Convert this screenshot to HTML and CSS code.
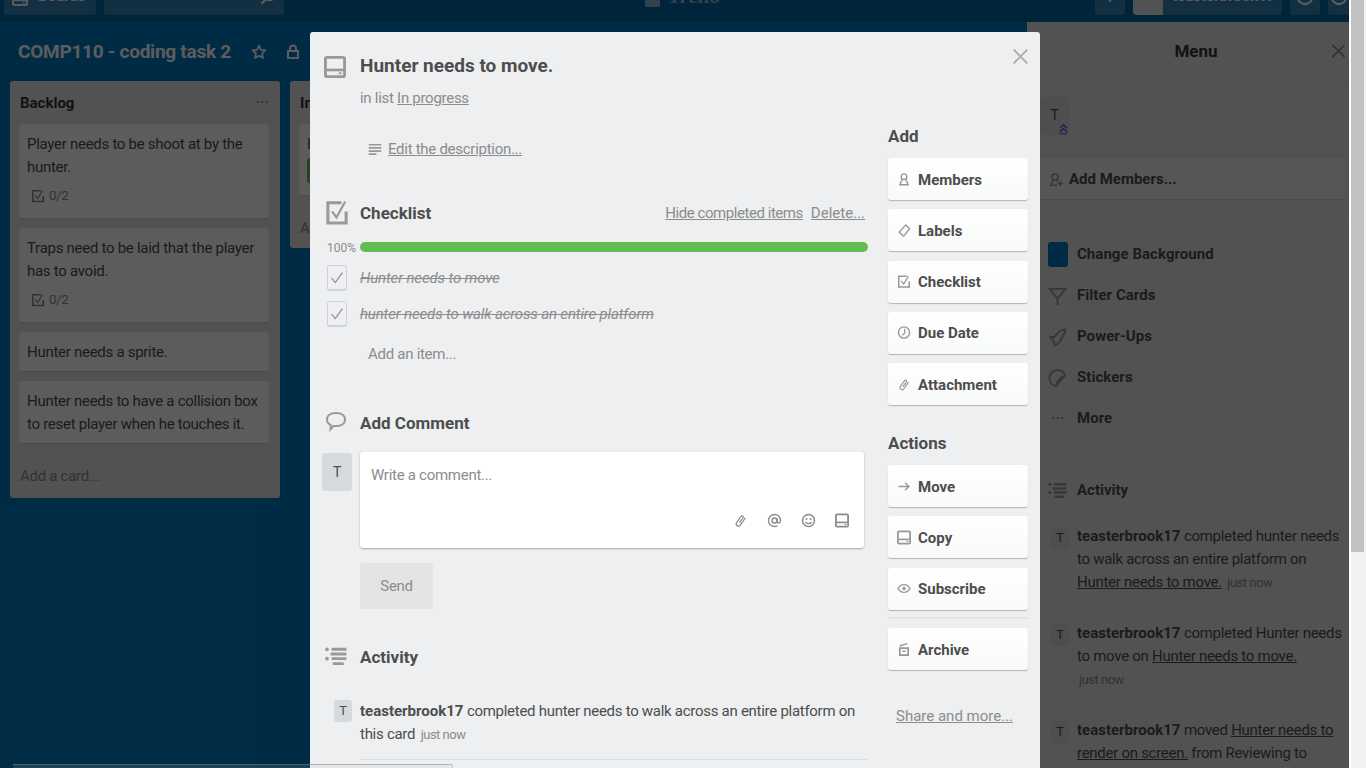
FILE: index.html
```html
<!DOCTYPE html>
<html lang="en">

<head>
    <meta charset="UTF-8">
    <title>Hunter needs to move. on COMP110 - coding task 2</title>
    <link rel="stylesheet" href="styles.css">
</head>

<body>

    <svg class="defs" width="0" height="0">
        <symbol id="i-card" viewBox="0 0 20 20"><rect x="1.300" y="1.300" width="17.400" height="17.400" rx="1.500" fill="none" stroke="currentColor" stroke-width="2.600"/><rect x="2" y="11.500" width="16" height="2.400" fill="currentColor"/><rect x="13.500" y="14.800" width="2.400" height="1.800" fill="currentColor"/></symbol>
        <symbol id="i-check" viewBox="0 0 20 22"><path d="M14 2.200H1.700v18.300h16.600V10" fill="none" stroke="currentColor" stroke-width="2.800"/><path d="M5.500 10l4 5.500L17.500 1" fill="none" stroke="currentColor" stroke-width="2"/></symbol>
        <symbol id="i-lines" viewBox="0 0 20 20"><path d="M1 2.500h18M1 7h18M1 11.500h18M1 16h11" stroke="currentColor" stroke-width="2.400"/></symbol>
        <symbol id="i-activity" viewBox="0 0 20 20"><circle cx="1.800" cy="3" r="1.700" fill="currentColor"/><circle cx="1.800" cy="11.500" r="1.700" fill="currentColor"/><path d="M6 3h13.500M5 7.300h14.500M6 11.500h13.500M7 16h10" stroke="currentColor" stroke-width="2.600"/></symbol>
        <symbol id="i-comment" viewBox="0 0 20 20"><path d="M10 2c5 0 9 2.300 9 6.500S15 15 10 15H7.500L4.500 18.300l.3-4.300C2.500 13 1 11 1 8.500 1 4.300 5 2 10 2z" fill="none" stroke="currentColor" stroke-width="2"/></symbol>
        <symbol id="i-clip" viewBox="0 0 20 20"><path d="M8.500 13L13.500 6c1-1.700-1.300-3.300-2.700-1.700L4.800 13c-2 3 2.400 6.300 4.800 3.200L16.500 6.500" fill="none" stroke="currentColor" stroke-width="1.700"/></symbol>
        <symbol id="i-at" viewBox="0 0 20 20"><circle cx="10" cy="10" r="3.300" fill="none" stroke="currentColor" stroke-width="1.900"/><path d="M13.300 6.500v5c0 2.500 4.700 2.500 4.700-1.500C18 5 14.500 2 10 2S2 5.500 2 10s3.500 8 8 8c1.500 0 3-.3 4-1" fill="none" stroke="currentColor" stroke-width="1.900"/></symbol>
        <symbol id="i-smile" viewBox="0 0 20 20"><circle cx="10" cy="10" r="8" fill="none" stroke="currentColor" stroke-width="2"/><circle cx="7.300" cy="8" r="1.400" fill="currentColor"/><circle cx="12.700" cy="8" r="1.400" fill="currentColor"/><path d="M5.800 12c1 2.800 7.400 2.800 8.400 0" fill="none" stroke="currentColor" stroke-width="1.700"/></symbol>
        <symbol id="i-person" viewBox="0 0 20 20"><circle cx="10" cy="6" r="4" fill="none" stroke="currentColor" stroke-width="2"/><path d="M7.500 9.500L4 17.500h12l-3.500-8" fill="none" stroke="currentColor" stroke-width="2"/></symbol>
        <symbol id="i-label" viewBox="0 0 20 20"><path d="M12.500 2l5.500 5.500-8.500 10.500-6.500-5.500z" fill="none" stroke="currentColor" stroke-width="2" stroke-linejoin="round"/></symbol>
        <symbol id="i-box" viewBox="0 0 20 20"><path d="M14 2.500H2.500v15.500h15v-8" fill="none" stroke="currentColor" stroke-width="2.200"/><path d="M6 9l3.500 4.500L16.500 2.500" fill="none" stroke="currentColor" stroke-width="1.800"/></symbol>
        <symbol id="i-clock" viewBox="0 0 20 20"><circle cx="10" cy="10" r="8" fill="none" stroke="currentColor" stroke-width="2"/><path d="M11 4.500V11L7.500 14" fill="none" stroke="currentColor" stroke-width="1.800"/></symbol>
        <symbol id="i-arrow" viewBox="0 0 20 20"><path d="M2 10h15M11.500 4.500L17 10l-5.500 5.500" fill="none" stroke="currentColor" stroke-width="2"/></symbol>
        <symbol id="i-eye" viewBox="0 0 20 20"><path d="M1.500 10C4 5.500 7 4.500 10 4.500s6 1 8.500 5.500c-2.500 4.500-5.500 5.500-8.500 5.500S4 14.500 1.500 10z" fill="none" stroke="currentColor" stroke-width="2"/><circle cx="10" cy="10" r="2.500" fill="currentColor"/></symbol>
        <symbol id="i-archive" viewBox="0 0 20 20"><path d="M4 5L15 1.500" stroke="currentColor" stroke-width="2"/><path d="M4 8h12v10H4z" fill="none" stroke="currentColor" stroke-width="2.400"/><path d="M7.500 12.500h5" stroke="currentColor" stroke-width="2"/></symbol>
        <symbol id="i-filter" viewBox="0 0 20 20"><path d="M1.500 2.500h17L10 13zM10 13v6.500" fill="none" stroke="currentColor" stroke-width="2"/></symbol>
        <symbol id="i-rocket" viewBox="0 0 20 20"><path d="M18 2c-6 1-9 4-11 8L2 10l4 4 1 5c4-2 7-6 8-9 2-2 3-5 3-8z" fill="none" stroke="currentColor" stroke-width="2" stroke-linejoin="round"/></symbol>
        <symbol id="i-sticker" viewBox="0 0 20 20"><path d="M9 18.500C4.500 18 1.500 14.500 1.500 10 1.500 5.500 5 1.500 10 1.500c4 0 7 2.500 8 6C14 12 11 14.500 9 18.500zM9 18c0-4 3-9 9-10" fill="none" stroke="currentColor" stroke-width="2"/></symbol>
        <symbol id="i-addperson" viewBox="0 0 20 20"><circle cx="8" cy="6" r="4" fill="none" stroke="currentColor" stroke-width="2"/><path d="M6 9.500L2 17h9M10 9.500l1.500 2.500M15 11v7M11.500 14.500h7" fill="none" stroke="currentColor" stroke-width="2"/></symbol>
        <symbol id="i-search" viewBox="0 0 20 20"><circle cx="12" cy="7" r="6" fill="none" stroke="currentColor" stroke-width="2.400"/><path d="M7.500 11.500L2 17" stroke="currentColor" stroke-width="2.800"/></symbol>
        <symbol id="i-x" viewBox="0 0 20 20"><path d="M2 2l16 16M18 2L2 18" stroke="currentColor" stroke-width="2.200"/></symbol>
        <symbol id="i-star" viewBox="0 0 20 20"><path d="M10 2l2.400 5.300 5.600.6-4.200 3.800 1.200 5.800L10 14.600l-5 2.900 1.200-5.800L2 7.900l5.600-.6z" fill="none" stroke="currentColor" stroke-width="2.200" stroke-linejoin="round"/></symbol>
        <symbol id="i-ring" viewBox="0 0 20 20"><circle cx="10" cy="10" r="8" fill="none" stroke="currentColor" stroke-width="2.400"/><path d="M6 9l3 3 5-5" fill="none" stroke="currentColor" stroke-width="2"/></symbol>
        <symbol id="i-chev" viewBox="0 0 10 12"><path d="M1 5l4-3.500L9 5M1 9l4-3.500L9 9" fill="none" stroke="currentColor" stroke-width="1.400"/><path d="M1 11.300h8" stroke="currentColor"/></symbol>
    </svg>

    <!-- board behind the card -->
    <div class="page">
        <div class="topbar">
            <div class="topbar-left">
                <span class="bar-btn boards-btn">
                    <svg class="boards-ic"><use href="#i-card"/></svg>
                    <span class="cut">Boards</span>
                </span>
                <span class="bar-btn search-btn"><svg class="search-ic"><use href="#i-search"/></svg></span>
            </div>
            <div class="logo"><span class="logo-box"></span>Trello</div>
            <div class="topbar-right">
                <span class="bar-btn icon-btn"><span class="cut">+</span></span>
                <span class="bar-btn user-btn"><span class="user-t"><span class="cut">T</span></span><span class="cut">teasterbrook17</span></span>
                <span class="bar-btn icon-btn"><svg class="ring"><use href="#i-ring"/></svg></span>
                <span class="bar-btn icon-btn last"><svg class="ring"><use href="#i-ring"/></svg></span>
            </div>
        </div>

        <div class="board-head">
            <span class="board-name">COMP110 - coding task 2</span>
            <svg class="star"><use href="#i-star"/></svg>
            <svg class="lock" viewBox="0 0 14 16"><path d="M4 7V4.500a3 3 0 0 1 6 0V7M2 7h10v7H2z" fill="none" stroke="currentColor" stroke-width="2"/></svg>
        </div>

        <div class="lists">
            <div class="list">
                <div class="list-title">Backlog<span class="dots">···</span></div>
                <div class="card has-badge">Player needs to be shoot at by the hunter.
                    <div class="badge"><svg><use href="#i-box"/></svg>0/2</div>
                </div>
                <div class="card has-badge">Traps need to be laid that the player has to avoid.
                    <div class="badge"><svg><use href="#i-box"/></svg>0/2</div>
                </div>
                <div class="card">Hunter needs a sprite.</div>
                <div class="card">Hunter needs to have a collision box to reset player when he touches it.</div>
                <div class="add-card">Add a card...</div>
            </div>
            <div class="list list-two">
                <div class="list-title">In progress</div>
                <div class="card tagged">
                    Hunter
                    <div class="green-tag"></div>
                </div>
                <div class="add-card">Add a card...</div>
            </div>
        </div>

        <div class="menu">
            <div class="menu-title">Menu<svg class="menu-x"><use href="#i-x"/></svg></div>
            <div class="menu-members">
                <span class="menu-avatar">T<svg class="chevrons"><use href="#i-chev"/></svg></span>
            </div>
            <div class="menu-add"><svg class="add-ic"><use href="#i-addperson"/></svg>Add Members...</div>
            <ul class="menu-items">
                <li><span class="swatch"></span>Change Background</li>
                <li><svg class="menu-ic"><use href="#i-filter"/></svg>Filter Cards</li>
                <li><svg class="menu-ic"><use href="#i-rocket"/></svg>Power-Ups</li>
                <li><svg class="menu-ic"><use href="#i-sticker"/></svg>Stickers</li>
                <li><span class="menu-more">···</span>More</li>
            </ul>
            <div class="menu-activity"><svg class="menu-ic"><use href="#i-activity"/></svg>Activity</div>
            <div class="entry">
                <span class="mini-t">T</span>
                <p><b>teasterbrook17</b> completed hunter needs to walk across an entire platform on <u>Hunter needs to move.</u> <small>just now</small></p>
            </div>
            <div class="entry">
                <span class="mini-t">T</span>
                <p><b>teasterbrook17</b> completed Hunter needs to move on <u>Hunter needs to move.</u> <small>just now</small></p>
            </div>
            <div class="entry">
                <span class="mini-t">T</span>
                <p><b>teasterbrook17</b> moved <u>Hunter needs to render on screen.</u> from Reviewing to Done</p>
            </div>
        </div>

        <div class="dim"></div>
    </div>

    <!-- card window -->
    <div class="modal">
        <svg class="modal-x"><use href="#i-x"/></svg>
        <div class="modal-main">
            <div class="sec title-sec">
                <svg class="sec-ic"><use href="#i-card"/></svg>
                <h2>Hunter needs to move.</h2>
                <div class="in-list">in list <u>In progress</u></div>
            </div>
            <div class="desc"><svg class="desc-ic"><use href="#i-lines"/></svg><u>Edit the description...</u></div>

            <div class="sec check-head">
                <svg class="sec-ic"><use href="#i-check"/></svg>
                <h3>Checklist</h3>
                <div class="check-links"><u class="hide-done">Hide completed items</u><u>Delete...</u></div>
            </div>
            <div class="progress"><span class="pct">100%</span><div class="bar"></div></div>
            <div class="item"><span class="tick"><svg viewBox="0 0 20 20"><path d="M4 10l4 5 8-11" fill="none" stroke="currentColor" stroke-width="1.300"/></svg></span><s>Hunter needs to move</s></div>
            <div class="item"><span class="tick"><svg viewBox="0 0 20 20"><path d="M4 10l4 5 8-11" fill="none" stroke="currentColor" stroke-width="1.300"/></svg></span><s>hunter needs to walk across an entire platform</s></div>
            <div class="add-item">Add an item...</div>

            <div class="sec comment-head">
                <svg class="sec-ic"><use href="#i-comment"/></svg>
                <h3>Add Comment</h3>
            </div>
            <div class="comment-row">
                <span class="avatar">T</span>
                <div class="comment-box">
                    <div class="placeholder">Write a comment...</div>
                    <div class="comment-tools">
                        <svg><use href="#i-clip"/></svg>
                        <svg><use href="#i-at"/></svg>
                        <svg><use href="#i-smile"/></svg>
                        <svg><use href="#i-card"/></svg>
                    </div>
                </div>
            </div>
            <div class="send">Send</div>

            <div class="sec activity-head">
                <svg class="sec-ic"><use href="#i-activity"/></svg>
                <h3>Activity</h3>
            </div>
            <div class="log">
                <span class="mini-t light">T</span>
                <p><b>teasterbrook17</b> completed hunter needs to walk across an entire platform on this card <small>just now</small></p>
            </div>
        </div>

        <div class="modal-side">
            <h4>Add</h4>
            <div class="btn"><svg><use href="#i-person"/></svg>Members</div>
            <div class="btn"><svg><use href="#i-label"/></svg>Labels</div>
            <div class="btn"><svg><use href="#i-box"/></svg>Checklist</div>
            <div class="btn"><svg><use href="#i-clock"/></svg>Due Date</div>
            <div class="btn"><svg><use href="#i-clip"/></svg>Attachment</div>
            <h4 class="actions">Actions</h4>
            <div class="btn"><svg><use href="#i-arrow"/></svg>Move</div>
            <div class="btn"><svg><use href="#i-card"/></svg>Copy</div>
            <div class="btn"><svg><use href="#i-eye"/></svg>Subscribe</div>
            <div class="side-line"></div>
            <div class="btn"><svg><use href="#i-archive"/></svg>Archive</div>
            <div class="share"><u>Share and more...</u></div>
        </div>
    </div>

    <div class="scroll-y"><div class="thumb-y"></div></div>
    <div class="thumb-x"></div>

</body>

</html>
```

FILE: styles.css
```css
* {
    box-sizing: border-box;
}

html,
body {
    margin: 0;
    height: 768px;
    overflow: hidden;
}

body {
    font-family: Roboto, "Liberation Sans", Arial, sans-serif;
    font-size: 15px;
    line-height: 23px;
    letter-spacing: -.28px;
    color: #4d4d4d;
    background: #0079bf;
}

h2,
h3,
h4,
p,
ul {
    margin: 0;
    padding: 0;
}

h2,
h3,
h4,
b {
    letter-spacing: 0;
}

.defs {
    position: absolute;
}

.page {
    width: 1349px;
    height: 768px;
    overflow: hidden;
    position: relative;
}

.dim {
    position: absolute;
    inset: 0;
    background: rgba(0, 0, 0, .64);
}

/* top bar, cut off by the scroll position */
.topbar {
    height: 22px;
    background: #0067a3;
    display: flex;
    justify-content: space-between;
    padding: 0 0 0 4px;
    overflow: hidden;
    position: relative;
}

.topbar-left,
.topbar-right {
    display: flex;
    gap: 8px;
    height: 15px;
}

.bar-btn {
    background: rgba(255, 255, 255, .2);
    border-radius: 0 0 3px 3px;
    color: #fff;
    font-weight: bold;
    letter-spacing: 0;
    line-height: 15px;
    display: flex;
    align-items: flex-start;
    height: 15px;
    overflow: hidden;
}

.cut {
    display: block;
    margin-top: -11px;
}

.boards-btn {
    width: 92px;
    padding-left: 8px;
    gap: 10px;
}

.boards-ic {
    width: 16px;
    height: 16px;
    margin-top: -10px;
    flex: none;
}

.search-btn {
    width: 180px;
    justify-content: flex-end;
    padding-right: 8px;
}

.search-ic {
    width: 16px;
    height: 16px;
    margin-top: -10px;
}

.logo {
    position: absolute;
    left: 645px;
    top: -16px;
    display: flex;
    align-items: flex-end;
    gap: 8px;
    color: #fff;
    opacity: .55;
    font: italic bold 22px/24px "Liberation Serif", serif;
}

.logo-box {
    width: 15px;
    height: 20px;
    margin-bottom: 1px;
    background: #fff;
    border-radius: 2px;
}

.icon-btn {
    width: 30px;
    justify-content: center;
    font-size: 18px;
}

.icon-btn.last {
    width: 21px;
    border-radius: 0 0 0 3px;
}

.ring {
    width: 18px;
    height: 18px;
    margin-top: -12px;
    flex: none;
}

.user-btn {
    width: 149px;
    gap: 9px;
}

.user-t {
    width: 30px;
    height: 15px;
    background: #e2e4e6;
    color: #4d4d4d;
    text-align: center;
    border-radius: 0 0 0 3px;
}

.user-t .cut {
    margin-top: -12px;
}

/* board */
.board-head {
    height: 59px;
    display: flex;
    align-items: center;
    padding-left: 18px;
    color: #fff;
}

.board-name {
    font-size: 19px;
    font-weight: bold;
    letter-spacing: -.25px;
    width: 214px;
    white-space: nowrap;
}

.star {
    width: 16px;
    height: 16px;
    margin-left: 19px;
}

.lock {
    width: 14px;
    height: 16px;
    margin-left: 19px;
}

.lists {
    display: flex;
    align-items: flex-start;
    gap: 10px;
    padding-left: 10px;
}

.list {
    width: 270px;
    background: #e2e4e6;
    border-radius: 3px;
    padding: 10px 11px 10px 9px;
}

.list-two {
    height: 167px;
}

.list-title {
    font-weight: bold;
    font-size: 15px;
    letter-spacing: 0;
    height: 33px;
    padding: 1px 0 0 1px;
    color: #333;
    display: flex;
    justify-content: space-between;
}

.dots {
    color: #999;
    line-height: 21px;
    font-size: 15px;
}

.card {
    background: #fff;
    border-bottom: 1px solid #ccc;
    border-radius: 3px;
    padding: 9px 8px 7px;
    margin-bottom: 9px;
    color: #4d4d4d;
    min-height: 40px;
}

.has-badge {
    height: 95px;
}

.tagged {
    height: 72px;
}

.badge {
    display: flex;
    align-items: center;
    gap: 4px;
    font-size: 13.500px;
    letter-spacing: -.5px;
    margin: 5px 0 0 4px;
    color: #8c8c8c;
}

.badge svg {
    width: 14px;
    height: 16px;
}

.add-card {
    color: #8c8c8c;
    padding: 12px 1px 0;
    height: 35px;
}

.green-tag {
    width: 80px;
    height: 25px;
    background: #61bd4f;
    border-radius: 3px;
    margin-top: 2px;
}

/* right hand menu */
.menu {
    position: absolute;
    left: 1027px;
    top: 22px;
    width: 322px;
    height: 746px;
    background: #e2e4e6;
    padding: 0 4px 0 0;
    overflow: hidden;
}

.menu-title {
    height: 59px;
    border-bottom: 1px solid #d6dadc;
    text-align: center;
    font-weight: bold;
    font-size: 17px;
    letter-spacing: 0;
    line-height: 58px;
    color: #333;
    position: relative;
    margin-right: -4px;
    padding-left: 16px;
}

.menu-x {
    position: absolute;
    right: 3px;
    top: 21px;
    width: 15px;
    height: 16px;
    color: #808080;
}

.menu-members {
    height: 77px;
    padding: 16px 0 0 13px;
}

.menu-avatar {
    display: block;
    width: 29px;
    height: 38px;
    background: #d6dadc;
    border-radius: 3px;
    text-align: center;
    font-size: 14px;
    line-height: 37px;
    position: relative;
}

.chevrons {
    position: absolute;
    right: 1px;
    bottom: 0;
    width: 9px;
    height: 12px;
    color: #4a4ad0;
}

.menu-add {
    height: 42px;
    margin-left: 13px;
    background: #edeff0;
    border-bottom: 1px solid #ccc;
    border-radius: 3px;
    display: flex;
    align-items: center;
    padding: 2px 0 0 9px;
    font-weight: bold;
    color: #4d4d4d;
    letter-spacing: 0;
}

.add-ic {
    width: 15px;
    height: 18px;
    margin-right: 5px;
    color: #999;
    flex: none;
}

.menu-ic {
    width: 19px;
    height: 20px;
    margin-right: 10px;
    color: #999;
    flex: none;
}

.menu-items {
    list-style: none;
    margin: 17px 0 0 13px;
    border-top: 1px solid #d6dadc;
    padding: 16px 0 14px 8px;
    border-bottom: 1px solid #d6dadc;
}

.menu-items li {
    height: 41px;
    display: flex;
    align-items: center;
    font-weight: bold;
    color: #4d4d4d;
    letter-spacing: .05px;
}

.swatch {
    width: 20px;
    height: 25px;
    background: #0079bf;
    border-radius: 3px;
    margin-right: 9px;
}

.menu-more {
    width: 19px;
    margin-right: 10px;
    color: #999;
    text-align: center;
}

.menu-activity {
    margin: 25px 0 0 21px;
    display: flex;
    align-items: center;
    font-weight: bold;
    letter-spacing: 0;
    color: #4d4d4d;
}

.entry {
    display: flex;
    gap: 8px;
    margin: 0 0 0 24px;
    padding: 23px 0 13px;
    border-bottom: 1px solid #d6dadc;
}

.entry + .entry {
    padding-top: 14px;
}

.entry p {
    flex: 1;
    padding-right: 2px;
}

.mini-t {
    flex: none;
    width: 18px;
    height: 22px;
    margin-top: 2px;
    background: #d6dadc;
    border-radius: 3px;
    text-align: center;
    font-size: 13px;
    line-height: 22px;
}

small {
    font-size: 13px;
    letter-spacing: -.5px;
    white-space: nowrap;
    color: #8c8c8c;
    margin-left: 2px;
}

/* card window */
.modal {
    position: absolute;
    left: 310px;
    top: 32px;
    width: 730px;
    height: 760px;
    background: #edeff0;
    border-radius: 3px 3px 0 0;
    display: flex;
    padding: 0 12px 0 50px;
    gap: 20px;
    overflow: hidden;
}

.modal-x {
    position: absolute;
    right: 11px;
    top: 15px;
    width: 17px;
    height: 19px;
    color: #aaa;
}

.modal-main {
    width: 508px;
    flex: none;
}

.sec {
    position: relative;
}

.sec-ic {
    position: absolute;
    left: -35px;
    top: 0;
    width: 22px;
    height: 22px;
    color: #999;
}

h2 {
    font-size: 19px;
    line-height: 28px;
    color: #4d4d4d;
}

h3 {
    font-size: 17px;
    line-height: 26px;
    color: #4d4d4d;
}

h4 {
    font-size: 17px;
    line-height: 26px;
    color: #4d4d4d;
    margin: 0 0 9px;
}

.title-sec {
    padding-top: 20px;
}

.title-sec .sec-ic {
    top: 24px;
    left: -36px;
}

.in-list {
    margin-top: 7px;
    color: #8c8c8c;
}

.desc {
    margin: 28px 0 0 8px;
    display: flex;
    align-items: center;
    color: #8c8c8c;
}

.desc-ic {
    width: 14px;
    height: 16px;
    color: #999;
    margin-right: 6px;
}

.check-head {
    margin-top: 39px;
    display: flex;
    justify-content: space-between;
    align-items: center;
}

.check-head .sec-ic {
    left: -34px;
    top: -1px;
    width: 22px;
    height: 27px;
}

.comment-head .sec-ic {
    left: -34px;
    width: 20px;
}

.activity-head .sec-ic {
    top: 2px;
}

.check-links {
    color: #8c8c8c;
    display: flex;
    gap: 8px;
    letter-spacing: 0;
    padding-right: 3px;
}

.hide-done {
    letter-spacing: -.45px;
}

.progress {
    position: relative;
    margin-top: 12px;
    height: 22px;
    padding-top: 4px;
}

.pct {
    position: absolute;
    left: -33px;
    top: -1px;
    font-size: 12px;
    letter-spacing: 0;
    color: #8c8c8c;
}

.bar {
    height: 10px;
    border-radius: 5px;
    background: #61bd4f;
}

.item {
    position: relative;
    height: 36px;
    line-height: 36px;
    letter-spacing: -.15px;
    color: #8c8c8c;
    font-style: italic;
}

.tick {
    position: absolute;
    left: -33px;
    top: 5px;
    width: 20px;
    height: 26px;
    border: 1px solid #d0d3d5;
    border-bottom-width: 2px;
    border-radius: 3px;
    color: #8c8c8c;
    display: flex;
    align-items: center;
}

.tick svg {
    width: 18px;
    height: 20px;
}

.add-item {
    margin: 11px 0 0 8px;
    color: #8c8c8c;
}

.comment-head {
    margin-top: 44px;
}

.comment-row {
    position: relative;
    margin-top: 16px;
}

.avatar {
    position: absolute;
    left: -38px;
    top: 1px;
    width: 30px;
    height: 38px;
    background: #d6dadc;
    border-radius: 3px;
    text-align: center;
    font-size: 14px;
    line-height: 38px;
}

.comment-box {
    width: 504px;
    height: 96px;
    background: #fff;
    border-radius: 3px;
    box-shadow: 0 1px 2px rgba(0, 0, 0, .3);
    padding: 12px 11px;
    position: relative;
    color: #8c8c8c;
}

.comment-tools {
    position: absolute;
    right: 15px;
    bottom: 20px;
    display: flex;
    gap: 19px;
    color: #8c8c8c;
}

.comment-tools svg {
    width: 15px;
    height: 15px;
}

.comment-tools svg:last-child {
    width: 14px;
}

.send {
    width: 73px;
    height: 46px;
    margin-top: 15px;
    background: #e2e4e6;
    border-radius: 3px;
    text-align: center;
    line-height: 46px;
    color: #8c8c8c;
}

.activity-head {
    margin-top: 35px;
}

.log {
    position: relative;
    margin-top: 30px;
    padding-bottom: 13px;
    border-bottom: 1px solid #dcdfe1;
}

.log .mini-t {
    position: absolute;
    left: -26px;
    top: -2px;
}

.modal-side {
    width: 140px;
    flex: none;
    padding-top: 91px;
}

.actions {
    margin-top: 25px;
}

.btn {
    height: 42px;
    margin: 0 0 9.300px;
    background: linear-gradient(#fff, #f8f9f9);
    border-radius: 3px;
    box-shadow: 0 1px 1px rgba(0, 0, 0, .25);
    display: flex;
    align-items: center;
    padding: 2px 0 0 9px;
    font-weight: bold;
    color: #4d4d4d;
    letter-spacing: 0;
}

.btn svg {
    width: 14px;
    height: 15px;
    margin: -2px 7px 0 0;
    color: #999;
}

.side-line {
    height: 2px;
    background: #e2e4e6;
    margin: -2px 0 9px;
}

.share {
    margin: 35px 0 0 8px;
    letter-spacing: 0;
    color: #8c8c8c;
}

/* browser scrollbars */
.scroll-y {
    position: absolute;
    right: 0;
    top: 0;
    width: 17px;
    height: 768px;
    background: #f1f1f1;
    border-left: 2px solid #fff;
}

.thumb-y {
    width: 13px;
    height: 552px;
    background: #c1c1c1;
}

.thumb-x {
    position: absolute;
    left: 13px;
    bottom: 0;
    width: 440px;
    height: 4px;
    background: rgba(190, 190, 190, .15);
    border-top: 1px solid rgba(128, 128, 128, .5);
    border-right: 1px solid rgba(128, 128, 128, .3);
    border-radius: 0 2px 0 0;
}
```
